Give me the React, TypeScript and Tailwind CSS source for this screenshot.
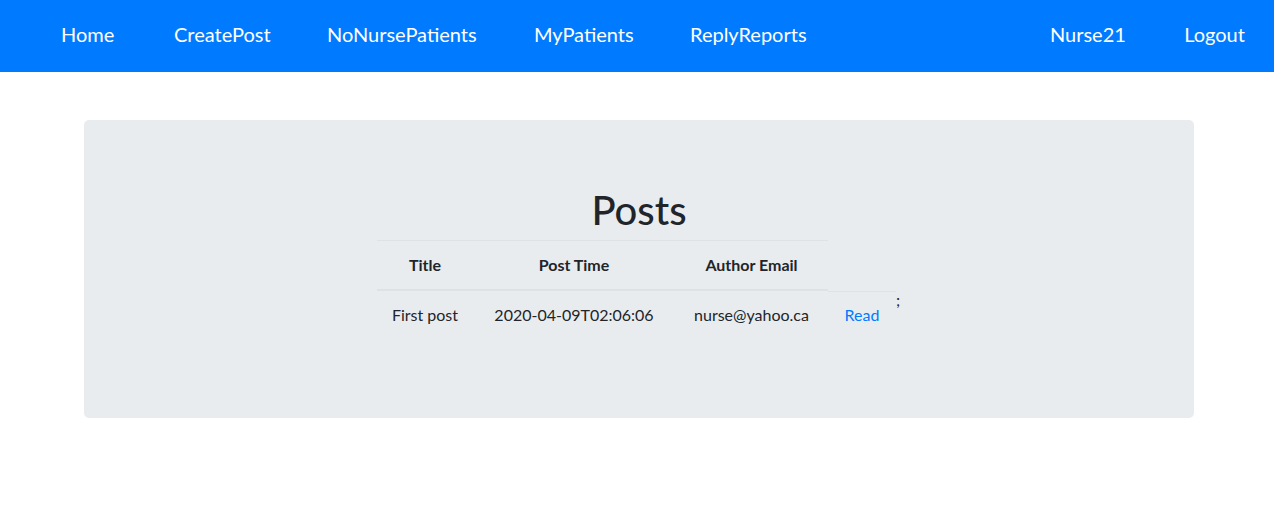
import React from "react";

export default function App() {
  const font = { fontFamily: "Lato, 'Noto Sans', sans-serif" };
  return (
    <div className="min-h-[523px] bg-white text-[#212529]" style={font}>
      <nav className="h-[72px] bg-[#007bff] flex items-center justify-between text-white text-[20px] pb-[5px]">
        <div className="flex items-center pl-[61px] gap-[60px]">
          <a className="w-[53px] text-center whitespace-nowrap">Home</a>
          <a className="w-[93px] text-center whitespace-nowrap">CreatePost</a>
          <a className="w-[147px] text-center whitespace-nowrap">NoNursePatients</a>
          <a className="w-[96px] text-center whitespace-nowrap">MyPatients</a>
          <a className="w-[116px] text-center whitespace-nowrap">ReplyReports</a>
        </div>
        <div className="flex items-center pr-[28px] gap-[61px]">
          <a className="w-[72px] text-center whitespace-nowrap">Nurse21</a>
          <a className="w-[63px] text-center whitespace-nowrap">Logout</a>
        </div>
      </nav>
      <div className="ml-[84px] w-[1110px] mt-[48px] h-[298px] bg-[#e9ecef] rounded-[5px] px-8 pt-16">
        <h1 className="text-center text-[40px] leading-[48px] font-medium mb-2 pt-[2px]">Posts</h1>
        <div className="flex justify-center items-start -mt-[2px]">
          <table className="table-fixed border-separate border-spacing-0 w-[519px] text-[16px] leading-6">
            <colgroup>
              <col className="w-[96px]" />
              <col className="w-[202px]" />
              <col className="w-[153px]" />
              <col className="w-[68px]" />
            </colgroup>
            <thead>
              <tr>
                <th className="border-t border-b-2 border-[#dee2e6] px-3 pt-3 pb-3 font-bold text-center">Title</th>
                <th className="border-t border-b-2 border-[#dee2e6] px-3 pt-3 pb-3 font-bold text-center">Post Time</th>
                <th className="border-t border-b-2 border-[#dee2e6] px-3 pt-3 pb-3 font-bold text-center whitespace-nowrap">Author Email</th>
              </tr>
            </thead>
            <tbody>
              <tr>
                <td className="px-3 py-3 text-center whitespace-nowrap">First post</td>
                <td className="px-3 py-3 text-center whitespace-nowrap">2020-04-09T02:06:06</td>
                <td className="px-3 py-3 text-center whitespace-nowrap">nurse@yahoo.ca</td>
                <td className="px-3 pt-[11px] pb-3 text-center border-t border-[#dee2e6]">
                  <a className="text-[#007bff]">Read</a>
                </td>
              </tr>
            </tbody>
          </table>
          <span className="mt-[48px] text-[16px] leading-6 w-[5px]">;</span>
        </div>
      </div>
    </div>
  );
}
